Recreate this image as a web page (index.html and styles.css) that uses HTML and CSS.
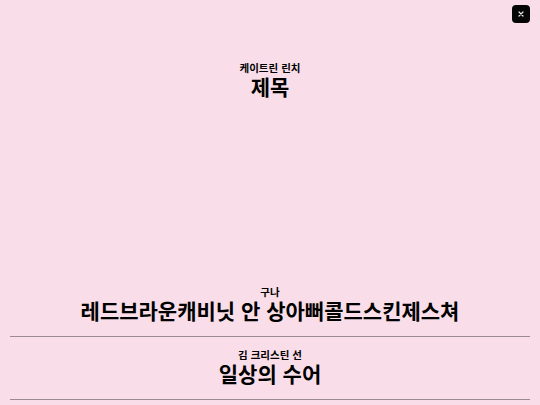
FILE: index.html
```html
<!DOCTYPE html>
<html lang="ko">
<head>
<meta charset="utf-8">
<title>제목</title>
<link rel="stylesheet" href="styles.css">
</head>
<body>
<button class="close" aria-label="닫기">
  <svg width="8" height="8" viewBox="0 0 8 8"><path d="M2 2 L6 6 M6 2 L2 6" stroke="#e6e6e6" stroke-width="1.2" stroke-linecap="round"/></svg>
</button>
<header class="entry head">
  <div class="label">케이트린 린치</div>
  <div class="title">제목</div>
</header>
<ul class="list">
  <li class="entry item">
    <div class="label">구나</div>
    <div class="title">레드브라운캐비닛 안 상아뻐콜드스킨제스쳐</div>
  </li>
  <li class="entry item">
    <div class="label">김 크리스틴 선</div>
    <div class="title">일상의 수어</div>
  </li>
</ul>
</body>
</html>
```

FILE: styles.css
```css
html, body {
  margin: 0;
  padding: 0;
}
body {
  background: #f9dee9;
  color: #000;
  font-family: "Noto Sans CJK KR", "Noto Sans", sans-serif;
  font-weight: 700;
  min-height: 405px;
  display: flex;
  flex-direction: column;
  padding: 0 10px 5px;
  box-sizing: border-box;
}
.close {
  position: absolute;
  top: 5px;
  left: 512px;
  width: 18px;
  height: 18px;
  border: 0;
  border-radius: 4px;
  background: #050505;
  padding: 0;
  display: flex;
  align-items: center;
  justify-content: center;
}
.entry {
  text-align: center;
  padding: 12px 0 14px;
}
.head {
  margin-top: 50px;
}
.list {
  list-style: none;
  margin: auto 0 0;
  padding: 0;
}
.item {
  border-bottom: 1px solid #9c8a92;
}
.label {
  font-size: 10.5px;
  line-height: 12px;
}
.title {
  font-size: 21px;
  line-height: 24px;
}
```
